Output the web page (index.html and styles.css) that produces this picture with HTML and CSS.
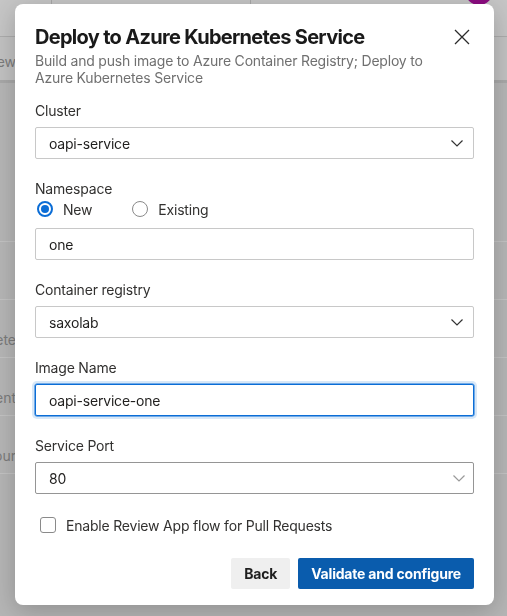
FILE: index.html
```html
<!DOCTYPE html>
<html lang="en">
<head>
<meta charset="utf-8">
<title>Deploy to Azure Kubernetes Service</title>
<link rel="stylesheet" href="styles.css">
</head>
<body>
<div class="page">
  <header class="topbar">
    <div class="cell c1"></div>
    <div class="cell c2"></div>
    <div class="spacer"></div>
    <div class="avatar"></div>
  </header>
  <nav class="tabs"><div class="clip"><span>Overview</span></div></nav>
  <section class="list">
    <div class="block"></div>
    <div class="row"></div>
    <div class="row"><div class="clip"><span>Complete</span></div></div>
    <div class="row"><div class="clip"><span>Content</span></div></div>
    <div class="row"><div class="clip"><span>Your</span></div></div>
  </section>
</div>

<div class="modal" role="dialog" aria-labelledby="dlg-title">
  <div class="head">
    <div class="titles">
      <h1 id="dlg-title">Deploy to Azure Kubernetes Service</h1>
      <p class="sub">Build and push image to Azure Container Registry; Deploy to Azure Kubernetes Service</p>
    </div>
    <button class="close" aria-label="Close">
      <svg width="16" height="16" viewBox="0 0 16 16"><path d="M1 1 L15 15 M15 1 L1 15" stroke="#2b2b2b" stroke-width="1.3" fill="none"/></svg>
    </button>
  </div>

  <div class="field first">
    <div class="label">Cluster</div>
    <div class="control select">
      <span>oapi-service</span>
      <svg class="chev" width="12" height="7" viewBox="0 0 12 7"><path d="M0.5 0.5 L6 6 L11.5 0.5" stroke="#333" stroke-width="1.2" fill="none"/></svg>
    </div>
  </div>

  <div class="field">
    <div class="label">Namespace</div>
    <div class="radios">
      <div class="radio"><span class="dot on"></span><span>New</span></div>
      <div class="radio"><span class="dot"></span><span>Existing</span></div>
    </div>
    <div class="control input gap9"><span>one</span></div>
  </div>

  <div class="field">
    <div class="label">Container registry</div>
    <div class="control select">
      <span>saxolab</span>
      <svg class="chev" width="12" height="7" viewBox="0 0 12 7"><path d="M0.5 0.5 L6 6 L11.5 0.5" stroke="#333" stroke-width="1.2" fill="none"/></svg>
    </div>
  </div>

  <div class="field">
    <div class="label">Image Name</div>
    <div class="control input focus"><span>oapi-service-one</span></div>
  </div>

  <div class="field">
    <div class="label">Service Port</div>
    <div class="control select dim">
      <span>80</span>
      <svg class="chev" width="12" height="7" viewBox="0 0 12 7"><path d="M0.5 0.5 L6 6 L11.5 0.5" stroke="#9a9a9a" stroke-width="1.2" fill="none"/></svg>
    </div>
  </div>

  <div class="check">
    <span class="box"></span>
    <span>Enable Review App flow for Pull Requests</span>
  </div>

  <div class="actions">
    <button class="btn back">Back</button>
    <button class="btn primary">Validate and configure</button>
  </div>
</div>
</body>
</html>
```
FILE: styles.css
```css
* { box-sizing: border-box; }
html, body { margin: 0; padding: 0; }
body {
  width: 507px;
  height: 616px;
  overflow: hidden;
  background: #b6b6b6;
  font-family: Inter, "Noto Sans", "Liberation Sans", sans-serif;
}

/* dimmed page behind the dialog */
.topbar {
  height: 37px;
  display: flex;
  background: #c6c6c6;
  border-bottom: 1px solid #adadad;
}
.c1 { width: 52px; border-right: 1px solid #a9a9a9; }
.c2 { width: 199px; border-right: 1px solid #a9a9a9; }
.spacer { flex: 1; }
.avatar {
  width: 28px;
  height: 28px;
  border-radius: 50%;
  background: #8b0c80;
  margin-top: -23px;
  margin-right: 14px;
}
.tabs {
  height: 46px;
  background: #c3c3c3;
  border-bottom: 3px solid #a9a9a9;
  padding-top: 15px;
}
.clip {
  width: 16px;
  overflow: hidden;
  display: flex;
  justify-content: flex-end;
  white-space: nowrap;
  font-size: 14px;
  line-height: 20px;
  color: #7c7c7c;
}
.list { background: #b7b7b7; }
.block { height: 159px; border-bottom: 1px solid #c4c4c4; }
.row {
  height: 58px;
  padding-top: 30px;
  border-bottom: 1px solid #c4c4c4;
}

/* dialog */
.modal {
  position: fixed;
  left: 15px;
  top: 4px;
  width: 479px;
  background: #fff;
  border-radius: 8px;
  padding: 20px 20px 16px;
  box-shadow: 0 6px 26px rgba(0, 0, 0, 0.22);
  color: #201f1e;
  letter-spacing: -0.2px;
}
.head {
  display: flex;
  align-items: flex-start;
  gap: 10px;
}
.titles { flex: 1; }
h1 {
  margin: 0;
  font-size: 20px;
  line-height: 26px;
  font-weight: 700;
  color: #1a1a1a;
  letter-spacing: -0.7px;
}
.sub {
  margin: 2px 0 0;
  font-size: 14px;
  line-height: 17px;
  color: #707070;
}
.close {
  width: 24px;
  height: 26px;
  padding: 0;
  border: 0;
  background: none;
  display: flex;
  align-items: center;
  justify-content: center;
}

.field { margin-top: 20px; }
.field.first { margin-top: 15px; }
.label {
  font-size: 14px;
  line-height: 20px;
  color: #323130;
}
.control {
  margin-top: 6px;
  height: 32px;
  border: 1px solid #c8c8c8;
  border-radius: 2px;
  padding: 0 10px 0 13px;
  display: flex;
  align-items: center;
  justify-content: space-between;
  font-size: 14px;
  color: #201f1e;
}
.control.gap9 { margin-top: 9px; }
.control.focus {
  border-color: #0b6dd6;
  box-shadow: 0 0 0 0.5px #0b6dd6, 0 0 0 3px rgba(11, 109, 214, 0.16);
}
.control.dim { border-color: #959595; padding-right: 8px; }

.radios {
  display: flex;
  height: 20px;
  align-items: center;
  gap: 40px;
  font-size: 14px;
  color: #323130;
}
.radio { display: flex; align-items: center; gap: 10px; }
.radio:first-child { margin-left: 2px; }
.dot {
  width: 16px;
  height: 16px;
  border-radius: 50%;
  border: 1px solid #8a8a8a;
  background: #fff;
  display: flex;
  align-items: center;
  justify-content: center;
}
.dot.on { border: 2px solid #0b6dd6; }
.dot.on::after {
  content: "";
  width: 8px;
  height: 8px;
  border-radius: 50%;
  background: #0b6dd6;
}

.check {
  margin-top: 21px;
  display: flex;
  align-items: center;
  gap: 10px;
  height: 20px;
  font-size: 14px;
  color: #323130;
}
.box {
  width: 16px;
  height: 16px;
  margin-left: 5px;
  border: 1px solid #8a8a8a;
  border-radius: 3px;
}

.actions {
  margin-top: 23px;
  display: flex;
  justify-content: flex-end;
  gap: 8px;
}
.btn {
  height: 31px;
  border: 0;
  border-radius: 2px;
  font-family: inherit;
  font-size: 14px;
  font-weight: 700;
  letter-spacing: -0.2px;
  padding: 0 13px;
}
.back { background: #efefef; color: #1f1f1f; padding: 0 13px; }
.primary { background: #0a5cad; color: #fff; }
```
